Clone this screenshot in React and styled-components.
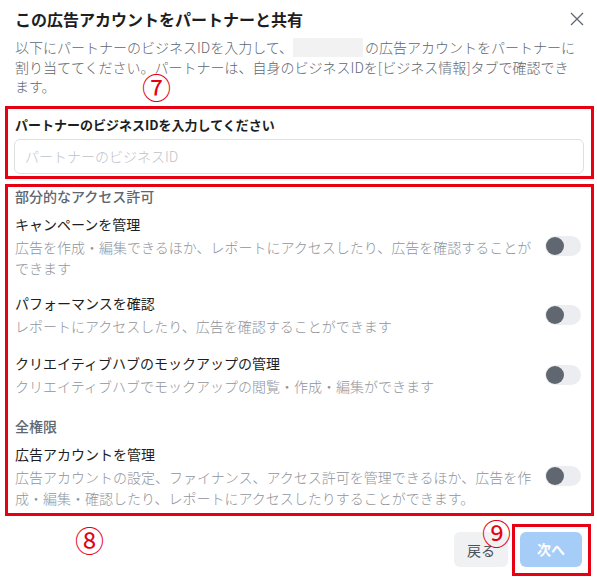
import React from "react";
import styled, { createGlobalStyle } from "styled-components";

const GlobalStyle = createGlobalStyle`
  html, body {
    margin: 0;
    padding: 0;
    background: #ffffff;
  }
  body {
    font-family: "Noto Sans CJK JP", "Noto Sans", sans-serif;
    color: #1c1e21;
  }
`;

const Dialog = styled.div`
  position: relative;
  width: 597px;
  height: 579px;
  background: #ffffff;
  overflow: hidden;
`;

const Header = styled.div`
  display: flex;
  align-items: center;
  justify-content: space-between;
  height: 38px;
  padding: 0 12px 0 15px;
  box-sizing: border-box;
`;

const Title = styled.h1`
  margin: 0;
  font-size: 16px;
  font-weight: 700;
  line-height: 20px;
  color: #1c1e21;
`;

const CloseButton = styled.button`
  display: flex;
  align-items: center;
  justify-content: center;
  width: 16px;
  height: 16px;
  padding: 0;
  border: none;
  background: none;
  cursor: pointer;
`;

const Intro = styled.p`
  margin: 0;
  padding: 0 16px 0 15px;
  font-size: 14px;
  font-weight: 300;
  line-height: 19.5px;
  color: #606770;
`;

const Redacted = styled.span`
  display: inline-block;
  width: 70px;
  height: 19px;
  margin: 0 2px 0 0;
  vertical-align: -4px;
  background: #f2f2f3;
`;

const Marker = styled.span`
  position: absolute;
  left: ${({ left }) => left}px;
  top: ${({ top }) => top}px;
  font-size: 29px;
  line-height: 29px;
  color: #e60012;
  pointer-events: none;
`;

const Highlight = styled.section`
  margin: ${({ gap }) => gap}px 3px 0 5px;
  border: 3px solid #e60012;
  padding: ${({ pad }) => pad};
`;

const FieldLabel = styled.div`
  font-size: 13px;
  font-weight: 700;
  line-height: 20px;
  color: #1c1e21;
  padding-left: 1px;
`;

const TextInput = styled.input`
  display: block;
  width: 100%;
  height: 35px;
  margin-top: 4px;
  box-sizing: border-box;
  padding: 0 10px;
  border: 1px solid #dddfe2;
  border-radius: 6px;
  font-family: inherit;
  font-size: 14px;
  font-weight: 300;
  color: #1c1e21;
  outline: none;

  &::placeholder {
    color: #bec3c9;
  }
`;

const GroupLabel = styled.div`
  margin-top: ${({ gap }) => gap}px;
  font-size: 14px;
  font-weight: 500;
  line-height: 18px;
  color: #606770;
`;

const PermRow = styled.div`
  display: flex;
  align-items: center;
  justify-content: space-between;
  margin-top: ${({ gap }) => gap}px;
`;

const PermText = styled.div`
  width: 520px;
`;

const PermTitle = styled.div`
  font-size: 14px;
  font-weight: 400;
  line-height: 20px;
  color: #1c1e21;
`;

const PermDesc = styled.div`
  margin-top: 3px;
  font-size: 14px;
  font-weight: 300;
  line-height: 21px;
  color: #90949c;
`;

const Track = styled.span`
  position: relative;
  display: inline-block;
  flex-shrink: 0;
  width: 36px;
  height: 20px;
  border-radius: 10px;
  background: #ebedf0;
`;

const Knob = styled.span`
  position: absolute;
  left: 1px;
  top: 1px;
  width: 18px;
  height: 18px;
  border-radius: 50%;
  background: #606770;
`;

const Footer = styled.div`
  display: flex;
  justify-content: flex-end;
  align-items: center;
  gap: 4px;
  margin-top: 8px;
  padding-right: 6px;
`;

const Button = styled.button`
  height: 35px;
  padding: 0 ${({ primary }) => (primary ? 17 : 13)}px;
  border: none;
  border-radius: 6px;
  font-family: inherit;
  font-size: 14px;
  font-weight: ${({ primary }) => (primary ? 700 : 400)};
  color: ${({ primary }) => (primary ? "#ffffff" : "#4b4f56")};
  background: ${({ primary }) => (primary ? "#a6cdf7" : "#f0f1f3")};
`;

const ButtonFrame = styled.div`
  border: 3px solid #e60012;
  padding: 5px 6px 6px 5px;
`;

function Toggle() {
  return (
    <Track>
      <Knob />
    </Track>
  );
}

const partial = [
  {
    title: "キャンペーンを管理",
    desc: "広告を作成・編集できるほか、レポートにアクセスしたり、広告を確認することができます",
    gap: 9,
  },
  {
    title: "パフォーマンスを確認",
    desc: "レポートにアクセスしたり、広告を確認することができます",
    gap: 14,
  },
  {
    title: "クリエイティブハブのモックアップの管理",
    desc: "クリエイティブハブでモックアップの閲覧・作成・編集ができます",
    gap: 16,
  },
];

function Permission({ title, desc, gap }) {
  return (
    <PermRow gap={gap}>
      <PermText>
        <PermTitle>{title}</PermTitle>
        <PermDesc>{desc}</PermDesc>
      </PermText>
      <Toggle />
    </PermRow>
  );
}

export default function App() {
  return (
    <>
      <GlobalStyle />
      <Dialog>
        <Header>
          <Title>この広告アカウントをパートナーと共有</Title>
          <CloseButton aria-label="閉じる">
            <svg width="14" height="14" viewBox="0 0 14 14">
              <path d="M1 1L13 13M13 1L1 13" stroke="#606770" strokeWidth="1.3" fill="none" />
            </svg>
          </CloseButton>
        </Header>
        <Intro>
          以下にパートナーのビジネスIDを入力して、
          <Redacted />
          の広告アカウントをパートナーに割り当ててください。パートナーは、自身のビジネスIDを[ビジネス情報]タブで確認できます。
        </Intro>

        <Highlight gap={9} pad="6px 7px 2px 6px">
          <FieldLabel>パートナーのビジネスIDを入力してください</FieldLabel>
          <TextInput placeholder="パートナーのビジネスID" />
        </Highlight>

        <Highlight gap={5} pad="0 10px 4px 7px">
          <GroupLabel gap={0}>部分的なアクセス許可</GroupLabel>
          {partial.map((p) => (
            <Permission key={p.title} {...p} />
          ))}
          <GroupLabel gap={20}>全権限</GroupLabel>
          <Permission
            gap={9}
            title="広告アカウントを管理"
            desc="広告アカウントの設定、ファイナンス、アクセス許可を管理できるほか、広告を作成・編集・確認したり、レポートにアクセスしたりすることができます。"
          />
        </Highlight>

        <Footer>
          <Button>戻る</Button>
          <ButtonFrame>
            <Button primary>次へ</Button>
          </ButtonFrame>
        </Footer>

        <Marker left={142} top={72}>⑦</Marker>
        <Marker left={75} top={525}>⑧</Marker>
        <Marker left={482} top={518}>⑨</Marker>
      </Dialog>
    </>
  );
}
